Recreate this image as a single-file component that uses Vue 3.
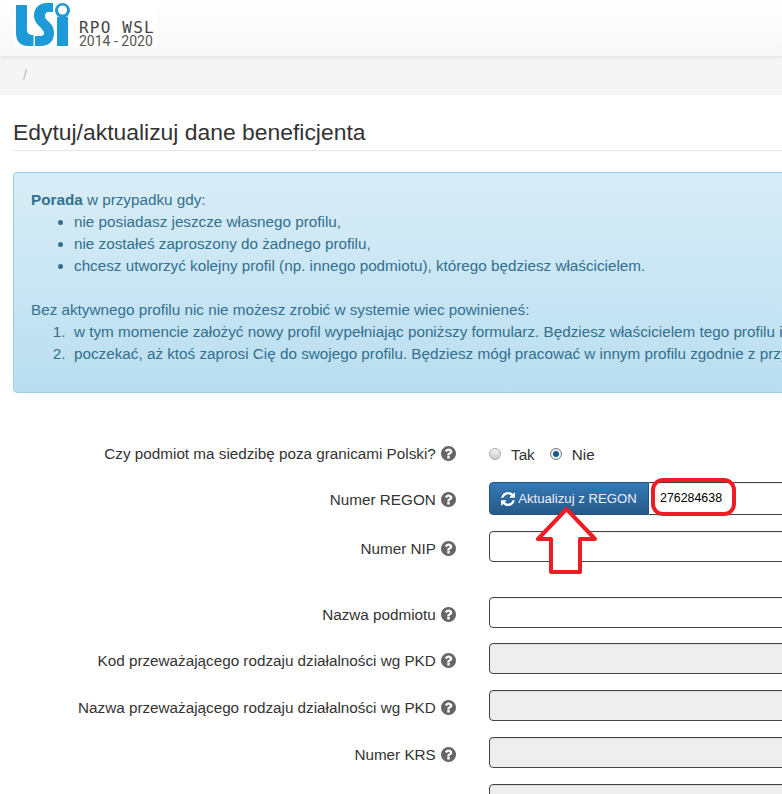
<script setup>
const helpPath = 'M1024 1376v-192q0-14-9-23t-23-9h-192q-14 0-23 9t-9 23v192q0 14 9 23t23 9h192q14 0 23-9t9-23zm256-672q0-88-55.500-163t-138.500-116-170-41q-243 0-371 213-15 24 8 42l132 100q7 6 19 6 16 0 25-12 53-68 86-92 34-24 86-24 48 0 85.500 26t37.500 59q0 38-20 61t-68 45q-63 28-115.500 86.500t-52.500 125.500v36q0 14 9 23t23 9h192q14 0 23-9t9-23q0-19 21.500-49.500t54.500-49.500q32-18 49-28.500t46-35 44.500-48 28-60.500 12.500-81zm384 192q0 209-103 385.500t-279.500 279.500-385.500 103-385.500-103-279.500-279.500-103-385.500 103-385.500 279.500-279.500 385.500-103 385.500 103 279.500 279.500 103 385.500z'
const refreshPath = 'M1639 1056q0 5-1 7-64 268-268 434.500t-478 166.500q-146 0-282.500-55t-243.500-157l-129 129q-19 19-45 19t-45-19-19-45v-448q0-26 19-45t45-19h448q26 0 45 19t19 45-19 45l-137 137q71 66 161 102t187 36q134 0 250-65t186-179q11-17 53-117 8-23 30-23h192q13 0 22.500 9.500t9.500 22.500zm25-800v448q0 26-19 45t-45 19h-448q-26 0-45-19t-19-45 19-45l138-138q-148-137-349-137-134 0-250 65t-186 179q-11 17-53 117-8 23-30 23h-199q-13 0-22.500-9.500t-9.500-22.500v-7q65-268 270-434.500t480-166.500q146 0 284 55.500t245 156.500l130-129q19-19 45-19t45 19 19 45z'
const tips = [
  'nie posiadasz jeszcze własnego profilu,',
  'nie zostałeś zaproszony do żadnego profilu,',
  'chcesz utworzyć kolejny profil (np. innego podmiotu), którego będziesz właścicielem.'
]
const steps = [
  'w tym momencie założyć nowy profil wypełniając poniższy formularz. Będziesz właścicielem tego profilu i będziesz mógł zapraszać innych użytkowników.',
  'poczekać, aż ktoś zaprosi Cię do swojego profilu. Będziesz mógł pracować w innym profilu zgodnie z przyznanymi uprawnieniami.'
]
const disabledRows = [
  'Kod przeważającego rodzaju działalności wg PKD',
  'Nazwa przeważającego rodzaju działalności wg PKD',
  'Numer KRS'
]
</script>

<template>
  <div class="page">
    <header class="top">
      <div class="logo">
        <svg class="mark" width="56" height="46" viewBox="0 0 56 46">
          <path fill="#1f9ad8" d="M2 3H13V28C13 31 15 33 19.500 33V44H14C6 44 2 39 2 31Z" />
          <path fill="#1f9ad8" d="M39 1V10H34C32 10 31 12 31 14C31 17 33 18 36 21C39 24 40 27 40 31C40 39 35 44 27 44H21V34H26C29 34 30 33 30 31C30 29 28 27 25 24C22 21 20 18 20 14C20 6 25 1 33 1Z" />
          <rect fill="#1f9ad8" x="43" y="15" width="11" height="29" />
          <circle fill="#1f9ad8" cx="48.500" cy="8.500" r="7.500" />
          <circle fill="#fff" cx="48.500" cy="8" r="4.500" />
        </svg>
        <div class="logo-text">
          <span class="logo-a">RPO WSL</span>
          <span class="logo-b">2014 - 2020</span>
        </div>
      </div>
    </header>
    <nav class="crumb"><span>/</span></nav>
    <main class="content">
      <h1 class="title">Edytuj/aktualizuj dane beneficjenta</h1>
      <section class="alert">
        <div><strong>Porada</strong> w przypadku gdy:</div>
        <ul>
          <li v-for="t in tips" :key="t">{{ t }}</li>
        </ul>
        <div class="spacer">Bez aktywnego profilu nic nie możesz zrobić w systemie wiec powinieneś:</div>
        <ol>
          <li v-for="s in steps" :key="s">{{ s }}</li>
        </ol>
      </section>
      <form class="form">
        <div class="row radio-row">
          <label class="lbl">Czy podmiot ma siedzibę poza granicami Polski? <svg class="help" viewBox="128 128 1536 1536"><path :d="helpPath" /></svg></label>
          <div class="ctrl radios">
            <span class="radio"></span><span class="rtext">Tak</span>
            <span class="radio on"></span><span class="rtext">Nie</span>
          </div>
        </div>
        <div class="row regon">
          <label class="lbl">Numer REGON <svg class="help" viewBox="128 128 1536 1536"><path :d="helpPath" /></svg></label>
          <div class="ctrl group">
            <button type="button" class="btn">
              <svg class="refresh" viewBox="128 128 1536 1536"><path :d="refreshPath" /></svg>
              Aktualizuj z REGON
            </button>
            <div class="inp joined">276284638</div>
          </div>
          <svg class="mark-oval" width="90" height="42" viewBox="0 0 90 42">
            <rect x="4" y="4" width="81" height="34" rx="10" fill="none" stroke="#ee1c25" stroke-width="4" />
          </svg>
          <svg class="mark-arrow" width="66" height="74" viewBox="0 0 66 74">
            <path d="M31.500 5 3 35H16V68H45V35H60Z" fill="#fff" stroke="#ee1c25" stroke-width="4" stroke-linejoin="round" />
          </svg>
        </div>
        <div class="row nip">
          <label class="lbl">Numer NIP <svg class="help" viewBox="128 128 1536 1536"><path :d="helpPath" /></svg></label>
          <div class="ctrl"><div class="inp"></div></div>
        </div>
        <div class="row name">
          <label class="lbl">Nazwa podmiotu <svg class="help" viewBox="128 128 1536 1536"><path :d="helpPath" /></svg></label>
          <div class="ctrl"><div class="inp"></div></div>
        </div>
        <div class="row" v-for="r in disabledRows" :key="r">
          <label class="lbl">{{ r }} <svg class="help" viewBox="128 128 1536 1536"><path :d="helpPath" /></svg></label>
          <div class="ctrl"><div class="inp off"></div></div>
        </div>
        <div class="row">
          <div class="lbl"></div>
          <div class="ctrl"><div class="inp off"></div></div>
        </div>
      </form>
    </main>
  </div>
</template>

<style>
html, body { margin: 0; overflow: hidden; background: #fff; }
</style>

<style scoped>
.page { width: 782px; height: 794px; overflow: hidden; font-family: "Liberation Sans", Arial, sans-serif; font-size: 15.25px; color: #333; background: #fff; }
.top { height: 56px; box-sizing: border-box; background: linear-gradient(#fff, #f7f7f7); box-shadow: 0 1px 4px rgba(0,0,0,.1); position: relative; }
.logo { display: flex; align-items: flex-end; width: 143px; height: 48px; margin-left: 14px; padding-top: 3px; box-sizing: border-box; background: #fff; }
.mark { display: block; filter: blur(.3px); flex: none; }
.logo-text { display: flex; flex-direction: column; margin-left: 9px; color: #444; white-space: nowrap; }
.logo-a { font-family: "DejaVu Sans Mono", monospace; font-size: 16px; line-height: 15px; letter-spacing: 1.2px; }
.logo-b { font-family: Roboto, sans-serif; font-size: 14px; line-height: 13px; color: #555; }
.crumb { height: 39px; background: #f5f5f5; padding: 10px 0 0 23px; box-sizing: border-box; color: #bbb; line-height: 18px; font-size: 14px; }
.content { padding: 0 0 0 13px; width: 1200px; }
.title { font-size: 22.9px; font-weight: 400; line-height: 30px; margin: 22px 0 0; padding-bottom: 3px; border-bottom: 1px solid #e5e5e5; color: #333; height: 30px; }
.alert { margin-top: 21px; height: 221px; box-sizing: border-box; padding: 16px 17px; border: 1px solid #9acfea; border-radius: 4px; background: linear-gradient(#d9edf7, #b9def0); color: #31708f; line-height: 22px; white-space: nowrap; }
.alert ul, .alert ol { margin: 0; padding-left: 43px; }
.alert ol li::marker { content: counter(list-item) ".  "; }
.spacer { margin-top: 22px; }
.form { margin-top: 48px; }
.row { display: flex; margin-bottom: 16px; position: relative; }
.lbl { width: 443px; flex: none; text-align: right; white-space: nowrap; line-height: 20px; padding-top: 8px; box-sizing: border-box; display: block; height: 31px; }
.help { display: inline-block; width: 15px; height: 15px; fill: #666; margin-left: 1px; vertical-align: -2px; }
.ctrl { margin-left: 33px; flex: 1; min-width: 0; }
.inp { height: 31px; box-sizing: border-box; border: 1px solid #444; border-radius: 4px; background: #fff; box-shadow: inset 0 1px 1px rgba(0,0,0,.075); }
.off { background: #eee; }
.radio-row { margin-bottom: 12px; height: 29px; }
.radio-row .lbl { padding-top: 3px; }
.radios { display: flex; align-items: center; height: 28px; margin-top: -1px; }
.radio { width: 12px; height: 12px; border-radius: 50%; border: 1px solid #aaa; background: linear-gradient(#f4f4f4, #ccc); box-sizing: border-box; flex: none; }
.radio.on { background: radial-gradient(circle, #0a5a96 0 2.500px, #eee 3.500px); border-color: #777; }
.rtext { margin: 0 15px 0 10px; }
.group { display: flex; }
.btn { width: 160px; height: 33px; padding: 0; box-sizing: border-box; flex: none; font: 13.2px "Liberation Sans", sans-serif; color: #eef; border: 1px solid #245580; border-radius: 4px 0 0 4px; background: linear-gradient(#337ab7, #265a88); display: flex; align-items: center; justify-content: center; gap: 3px; }
.refresh { width: 14px; height: 14px; fill: #fff; flex: none; }
.joined { height: 33px; border-radius: 0 4px 4px 0; border-left: 0; flex: 1; font: 12.4px/31px "Liberation Sans", sans-serif; color: #000; padding-left: 11px; }
.mark-oval { position: absolute; left: 636px; top: -6px; z-index: 2; }
.mark-arrow { position: absolute; left: 522px; top: 22px; z-index: 2; }
.nip { margin-bottom: 35px; }
.name { margin-bottom: 15px; }
</style>
